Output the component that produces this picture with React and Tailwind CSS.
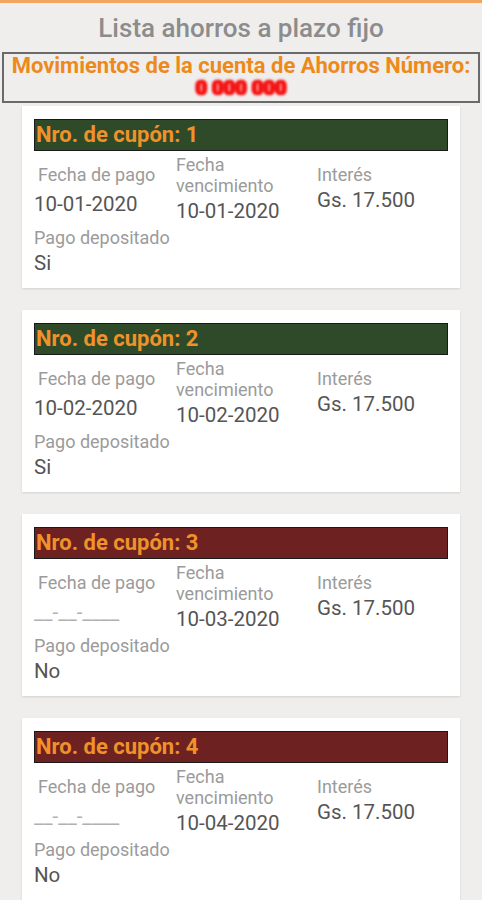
import React from "react";

const coupons = [
  { nro: 1, pago: "10-01-2020", venc: "10-01-2020", interes: "Gs. 17.500", depositado: "Si", paid: true },
  { nro: 2, pago: "10-02-2020", venc: "10-02-2020", interes: "Gs. 17.500", depositado: "Si", paid: true },
  { nro: 3, pago: null, venc: "10-03-2020", interes: "Gs. 17.500", depositado: "No", paid: false },
  { nro: 4, pago: null, venc: "10-04-2020", interes: "Gs. 17.500", depositado: "No", paid: false },
];

function CouponCard({ c }) {
  return (
    <div className="bg-white mx-[22px] mb-[22px] px-3 pt-[13px] pb-3 shadow-[0_1px_2px_rgba(0,0,0,0.12)]">
      {/* header bar */}
      <div
        className={`h-8 border border-[#1a1a1a] flex items-center px-px text-[22px] font-bold text-[#f0922a] leading-none ${
          c.paid ? "bg-[#2f4a28]" : "bg-[#6e2121]"
        }`}
      >
        Nro. de cupón: {c.nro}
      </div>

      <div className="grid grid-cols-[142px_141px_1fr]">
        <div className="pt-[13px]">
          <p className="pl-1 text-[18px] leading-[21px] text-[#9b9b9b]">Fecha de pago</p>
          {c.pago ? (
            <p className="mt-[6px] text-[20.5px] leading-[26px] text-[#555555]">{c.pago}</p>
          ) : (
            <p className="mt-[6px] text-[20.5px] leading-[26px] text-[#b0b0b0]">__-__-____</p>
          )}
        </div>
        <div className="pt-[3px]">
          <p className="text-[18px] leading-[21px] text-[#9b9b9b]">
            Fecha
            <br />
            vencimiento
          </p>
          <p className="mt-[2px] text-[20.5px] leading-[26px] text-[#555555]">{c.venc}</p>
        </div>
        <div className="pt-[13px]">
          <p className="text-[18px] leading-[21px] text-[#9b9b9b]">Interés</p>
          <p className="mt-[2px] text-[20.5px] leading-[26px] text-[#555555]">{c.interes}</p>
        </div>
      </div>

      <p className="mt-[3px] text-[18px] leading-[21px] text-[#9b9b9b]">Pago depositado</p>
      <p className="mt-[2px] text-[20.5px] leading-[26px] text-[#555555]">{c.depositado}</p>
    </div>
  );
}

export default function App() {
  return (
    <div className="min-h-screen bg-[#efeeec] font-['Roboto',sans-serif] overflow-hidden h-[900px]">
      <div className="h-[3px] bg-[#f3a45e]" />

      <h1 className="text-center text-[26px] font-medium text-[#8c8c8c] leading-[30px] pt-[10px] pb-[9px]">
        Lista ahorros a plazo fijo
      </h1>

      <div className="mx-[2px] border-2 border-[#6a6a6a] text-center text-[22px] font-bold leading-[23px] text-[#ec8a1c] pb-px">
        <p>Movimientos de la cuenta de Ahorros Número:</p>
        {/* account number is scribbled out in red in the screenshot */}
        <p className="text-[20px] font-black text-[#f01818] blur-[1px] [text-shadow:0_0_2px_#ff1010,1px_0_0_#ff1010,-1px_0_0_#ff1010]">
          0 000 000
        </p>
      </div>

      <div className="pt-[3px]">
        {coupons.map((c) => (
          <CouponCard key={c.nro} c={c} />
        ))}
      </div>
    </div>
  );
}
